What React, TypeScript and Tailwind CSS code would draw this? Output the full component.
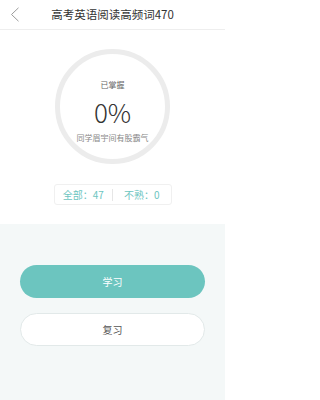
import React from "react";

const font = {
  fontFamily: '"Noto Sans CJK SC", "Noto Sans", Roboto, sans-serif',
};

export default function App() {
  return (
    <div className="flex h-[400px] w-[225px] flex-col bg-white" style={font}>
      {/* Header */}
      <div className="relative flex h-[30px] shrink-0 items-center justify-center border-b border-[#eeeeee]">
        <svg
          className="absolute left-[10px] top-[7px]"
          width="10"
          height="15"
          viewBox="0 0 10 15"
          fill="none"
        >
          <path d="M8.5 0.8 L1.5 7.5 L8.5 14.2" stroke="#9a9a9a" strokeWidth="1" />
        </svg>
        <span className="text-[11.5px] text-[#333333]">高考英语阅读高频词470</span>
      </div>

      {/* Progress */}
      <div className="flex flex-col items-center pt-[19px]">
        <div className="flex h-[115px] w-[115px] flex-col items-center rounded-full border-[5px] border-[#ececec] pt-[26px]">
          <span className="text-[8px] leading-[10px] text-[#666666]">已掌握</span>
          <span className="mt-[7px] text-[26px] font-light leading-[30px] text-[#333333]">0%</span>
          <span className="mt-[6px] text-[8px] leading-[10px] text-[#888888]">同学眉宇间有股霸气</span>
        </div>

        <div className="mt-[20px] flex h-[21px] w-[118px] items-center rounded-[3px] border border-[#f0f0f0] text-[10px] text-[#6cc5bf]">
          <span className="flex-1 text-center">全部：47</span>
          <span className="h-[12px] w-px bg-[#e6e6e6]" />
          <span className="flex-1 text-center">不熟：0</span>
        </div>
      </div>

      {/* Actions */}
      <div className="mt-[19px] flex flex-1 flex-col items-center bg-[#f4f8f8] pt-[41px]">
        <button
          type="button"
          className="flex h-[33px] w-[185px] items-center justify-center rounded-full bg-[#6cc5bf] text-[10px] text-white"
        >
          学习
        </button>
        <button
          type="button"
          className="mt-[15px] flex h-[33px] w-[185px] items-center justify-center rounded-full border border-[#e2e9e9] bg-white text-[10px] text-[#555555]"
        >
          复习
        </button>
      </div>
    </div>
  );
}
